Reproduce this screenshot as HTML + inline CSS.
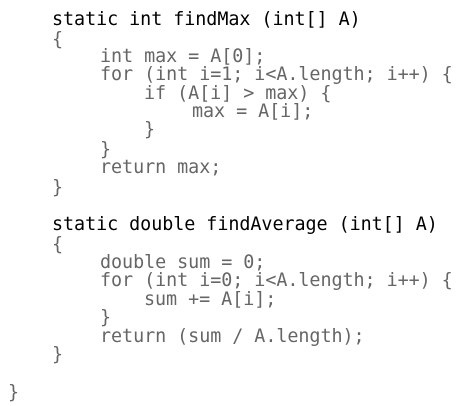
<!DOCTYPE html>
<html><head><style>
html,body{margin:0;padding:0;background:#fff;width:469px;height:406px;overflow:hidden;}
div{position:absolute;font-family:"DejaVu Sans Mono","Liberation Mono",monospace;font-size:18.4px;line-height:20px;white-space:pre;color:#666;letter-spacing:-0.05px;}
.k{color:#000;}
</style></head><body>
<div class="k" style="left:52px;top:10px">static int findMax (int[] A)</div>
<div style="left:52px;top:30px">{</div>
<div style="left:100px;top:47px">int max = A[0];</div>
<div style="left:100px;top:65px">for (int i=1; i&lt;A.length; i++) {</div>
<div style="left:144px;top:84px">if (A[i] &gt; max) {</div>
<div style="left:192px;top:102px">max = A[i];</div>
<div style="left:144px;top:120px">}</div>
<div style="left:100px;top:140px">}</div>
<div style="left:100px;top:158px">return max;</div>
<div style="left:52px;top:178px">}</div>
<div class="k" style="left:52px;top:215px">static double findAverage (int[] A)</div>
<div style="left:52px;top:235px">{</div>
<div style="left:100px;top:253px">double sum = 0;</div>
<div style="left:100px;top:271px">for (int i=0; i&lt;A.length; i++) {</div>
<div style="left:144px;top:290px">sum += A[i];</div>
<div style="left:100px;top:308px">}</div>
<div style="left:100px;top:327px">return (sum / A.length);</div>
<div style="left:52px;top:345px">}</div>
<div style="left:8px;top:383px">}</div>
</body></html>
